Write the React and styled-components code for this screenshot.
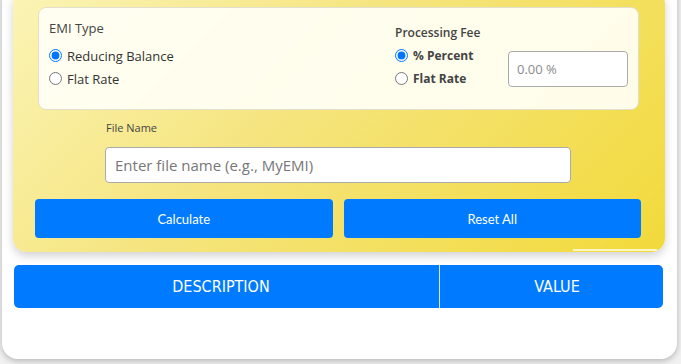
import React from "react";
import styled, { createGlobalStyle } from "styled-components";

const Global = createGlobalStyle`
  html, body { margin: 0; padding: 0; }
  body {
    background: #f1f1f1;
    font-family: "Open Sans", "Noto Sans", sans-serif;
    overflow: hidden;
    height: 364px;
  }
  * { box-sizing: border-box; }
`;

const Page = styled.div`
  padding: 0 4px 6px 2px;
`;

const Card = styled.div`
  margin-top: -20px;
  background: #fff;
  border-radius: 16px;
  box-shadow: 0 2px 6px rgba(0, 0, 0, 0.25);
  padding: 10px 12px 51px 11px;
`;

const Panel = styled.div`
  position: relative;
  border-radius: 14px;
  background: linear-gradient(135deg, #fbf4b6 0%, #f5e47c 45%, #f2da3a 100%);
  box-shadow: 0 4px 10px rgba(0, 0, 0, 0.18);
  padding: 17px 24px 14px 22px;
  display: flex;
  flex-direction: column;
`;

const PanelEdge = styled.div`
  position: absolute;
  left: 560px;
  bottom: 1px;
  width: 84px;
  height: 2px;
  background: rgba(255, 252, 220, 0.85);
`;

const OptionsBox = styled.div`
  margin: 0 2px 0 3px;
  background: rgba(255, 255, 245, 0.93);
  border: 1px solid #e2e0cc;
  border-radius: 8px;
  padding: 11px 10px 19px 10px;
  display: flex;
  align-items: flex-start;
`;

const Group = styled.div`
  flex: 1;
  display: flex;
  flex-direction: column;
`;

const FeeGroup = styled.div`
  width: 233px;
  margin-top: 5px;
  display: flex;
  flex-direction: column;
`;

const GroupTitle = styled.div`
  font-size: ${(p) => (p.$small ? "12px" : "13px")};
  font-weight: ${(p) => (p.$small ? 600 : 400)};
  line-height: ${(p) => (p.$small ? "17px" : "18px")};
  color: #444;
  margin-bottom: ${(p) => (p.$small ? "3px" : "7px")};
`;

const FeeRow = styled.div`
  display: flex;
  align-items: center;
  justify-content: space-between;
`;

const RadioList = styled.div`
  display: flex;
  flex-direction: column;
`;

const RadioLabel = styled.label`
  display: flex;
  align-items: center;
  height: 23px;
  font-size: ${(p) => (p.$bold ? "12px" : "13px")};
  font-weight: ${(p) => (p.$bold ? 700 : 400)};
  color: ${(p) => (p.$bold ? "#444" : "#333")};
  input {
    margin: 0 5px 0 0;
    width: 13px;
    height: 13px;
    accent-color: #0075ff;
  }
`;

const FeeInput = styled.input`
  width: 120px;
  height: 36px;
  border: 1px solid #aaa;
  border-radius: 4px;
  padding: 0 8px;
  font-family: "Open Sans", "Noto Sans", sans-serif;
  font-size: 13px;
  color: #333;
  background: #fff;
  margin-top: 3px;
  &::placeholder { color: #8a8a8a; }
`;

const FileGroup = styled.div`
  width: 466px;
  margin: 10px 0 0 70px;
  display: flex;
  flex-direction: column;
`;

const FileLabel = styled.label`
  font-size: 11px;
  line-height: 15px;
  color: #444;
  padding-left: 1px;
  margin-bottom: 12px;
`;

const TextInput = styled.input`
  height: 36px;
  border: 1px solid #aaa;
  border-radius: 4px;
  padding: 0 9px;
  font-family: "Open Sans", "Noto Sans", sans-serif;
  font-size: 15px;
  background: #fff;
  &::placeholder { color: #777; }
`;

const Buttons = styled.div`
  margin-top: 16px;
  display: grid;
  grid-template-columns: 1fr 1fr;
  gap: 11px;
`;

const Button = styled.button`
  height: 39px;
  border: none;
  border-radius: 4px;
  background: #007bff;
  color: #fff;
  font-family: Lato, "Open Sans", sans-serif;
  font-size: 13px;
  cursor: pointer;
`;

const Table = styled.table`
  margin: 13px 2px 0 1px;
  width: calc(100% - 3px);
  border-collapse: separate;
  border-spacing: 0;
`;

const Th = styled.th`
  height: 43px;
  background: #007bff;
  color: #fff;
  font-family: "Liberation Sans Narrow", "DejaVu Sans Condensed", sans-serif;
  font-size: 16px;
  font-weight: 400;
  text-transform: uppercase;
  text-align: center;
  padding: 0;
  &:first-child {
    width: 426px;
    padding-right: 11px;
    border-radius: 5px 0 0 5px;
    border-right: 1px solid #d9e8ff;
  }
  &:last-child {
    padding-left: 11px;
    border-radius: 0 5px 5px 0;
  }
`;

export default function App() {
  return (
    <Page>
      <Global />
      <Card>
        <Panel>
          <OptionsBox>
            <Group>
              <GroupTitle>EMI Type</GroupTitle>
              <RadioList>
                <RadioLabel>
                  <input type="radio" name="emi" defaultChecked />
                  Reducing Balance
                </RadioLabel>
                <RadioLabel>
                  <input type="radio" name="emi" />
                  Flat Rate
                </RadioLabel>
              </RadioList>
            </Group>
            <FeeGroup>
              <GroupTitle $small>Processing Fee</GroupTitle>
              <FeeRow>
                <RadioList>
                  <RadioLabel $bold>
                    <input type="radio" name="fee" defaultChecked />
                    % Percent
                  </RadioLabel>
                  <RadioLabel $bold>
                    <input type="radio" name="fee" />
                    Flat Rate
                  </RadioLabel>
                </RadioList>
                <FeeInput placeholder="0.00 %" />
              </FeeRow>
            </FeeGroup>
          </OptionsBox>
          <FileGroup>
            <FileLabel>File Name</FileLabel>
            <TextInput placeholder="Enter file name (e.g., MyEMI)" />
          </FileGroup>
          <Buttons>
            <Button>Calculate</Button>
            <Button>Reset All</Button>
          </Buttons>
          <PanelEdge />
        </Panel>
        <Table>
          <thead>
            <tr>
              <Th>Description</Th>
              <Th>Value</Th>
            </tr>
          </thead>
        </Table>
      </Card>
    </Page>
  );
}
